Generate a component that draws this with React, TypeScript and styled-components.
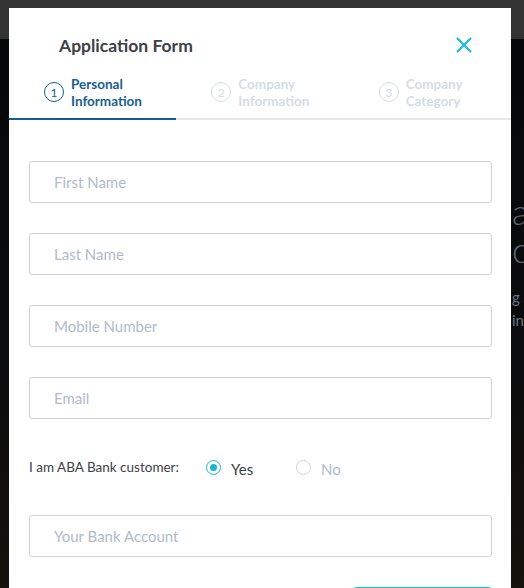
import styled, { createGlobalStyle } from "styled-components";

const GlobalStyle = createGlobalStyle`
  html, body {
    margin: 0;
    padding: 0;
    width: 524px;
    height: 588px;
    overflow: hidden;
    background: #000;
    font-family: "Lato", "Noto Sans", sans-serif;
  }
`;

const Page = styled.div`
  position: relative;
  width: 524px;
  height: 588px;
  overflow: hidden;
  background: linear-gradient(180deg, #050607 0%, #0b0c0e 60%, #15110c 100%);
`;

const TopBar = styled.div`
  height: 39px;
  background: #333333;
`;

const Hero = styled.div`
  padding: 153px 0 0 512px;
  white-space: nowrap;
  color: #5d6670;
`;

const HeroTitle = styled.div`
  font-size: 35px;
  font-weight: 300;
  line-height: 38px;
`;

const HeroText = styled.div<{ $first?: boolean }>`
  margin-top: ${(p) => (p.$first ? "18px" : "0")};
  font-size: 15px;
  line-height: 23px;
  color: #6e757d;
`;

const Modal = styled.div`
  position: absolute;
  left: 9px;
  top: 8px;
  width: 502px;
  bottom: 0;
  background: #fff;
`;

const Header = styled.div`
  display: flex;
  align-items: center;
  justify-content: space-between;
  padding: 26px 38px 0 50px;
  height: 22px;
`;

const Title = styled.h1`
  margin: 0;
  font-size: 17.5px;
  font-weight: 700;
  color: #3b4047;
`;

const Close = styled.button`
  border: 0;
  background: none;
  padding: 0;
  width: 18px;
  height: 18px;
  cursor: pointer;
  display: flex;
`;

const Tabs = styled.div`
  display: grid;
  grid-template-columns: repeat(3, 1fr);
  margin-top: 20px;
  border-bottom: 2px solid #e4e8ec;
`;

const Tab = styled.div<{ $active?: boolean }>`
  display: flex;
  align-items: flex-start;
  gap: 7px;
  padding: 0 0 8px 35px;
  margin-bottom: -2px;
  border-bottom: 2px solid ${(p) => (p.$active ? "#0f5f8c" : "transparent")};
  color: ${(p) => (p.$active ? "#17608f" : "#d6dce3")};
`;

const StepNum = styled.span`
  flex: none;
  box-sizing: border-box;
  width: 20px;
  height: 20px;
  margin-top: 6px;
  border-radius: 50%;
  border: 1px solid currentColor;
  display: flex;
  align-items: center;
  justify-content: center;
  font-size: 12px;
  font-weight: 400;
`;

const StepLabel = styled.span`
  font-size: 13.5px;
  font-weight: 700;
  line-height: 17px;
`;

const Form = styled.form`
  display: flex;
  flex-direction: column;
  gap: 30px;
  padding: 41px 19px 0 20px;
`;

const Input = styled.input`
  box-sizing: border-box;
  width: 100%;
  height: 42px;
  padding: 0 24px;
  border: 1px solid #d0d3dc;
  border-radius: 3px;
  font-family: inherit;
  font-size: 15px;
  color: #3b4047;
  outline: none;
  &::placeholder {
    color: #b3bac8;
  }
`;

const RadioRow = styled.div`
  display: flex;
  align-items: center;
  height: 36px;
`;

const RadioLabel = styled.span`
  font-size: 13.5px;
  color: #3b4047;
  width: 177px;
`;

const Option = styled.label<{ $checked?: boolean }>`
  display: flex;
  align-items: center;
  gap: 10px;
  width: 90px;
  font-size: 15px;
  color: ${(p) => (p.$checked ? "#3b4047" : "#b3bac8")};
`;

const OptionText = styled.span`
  margin-top: 4px;
`;

const Dot = styled.span<{ $checked?: boolean }>`
  box-sizing: border-box;
  width: 15px;
  height: 15px;
  border-radius: 50%;
  border: 1px solid ${(p) => (p.$checked ? "#17b5cf" : "#d0d3dc")};
  display: flex;
  align-items: center;
  justify-content: center;
  &::after {
    content: "";
    width: 7px;
    height: 7px;
    border-radius: 50%;
    background: ${(p) => (p.$checked ? "#17b5cf" : "transparent")};
  }
`;

const Actions = styled.div`
  display: flex;
  justify-content: flex-end;
`;

const Button = styled.button`
  width: 139px;
  height: 40px;
  border: 0;
  border-radius: 4px;
  background: #17b9d1;
  color: #fff;
  font-family: inherit;
  font-size: 15px;
`;

const steps = [
  { n: 1, a: "Personal", b: "Information" },
  { n: 2, a: "Company", b: "Information" },
  { n: 3, a: "Company", b: "Category" },
];

export default function App() {
  return (
    <Page>
      <GlobalStyle />
      <TopBar />
      <Hero>
        <HeroTitle>al</HeroTitle>
        <HeroTitle>ce</HeroTitle>
        <HeroText $first>g a</HeroText>
        <HeroText>in</HeroText>
      </Hero>
      <Modal>
        <Header>
          <Title>Application Form</Title>
          <Close aria-label="Close">
            <svg width="18" height="18" viewBox="0 0 18 18">
              <path
                d="M2 2 L16 16 M16 2 L2 16"
                stroke="#1dbcd5"
                strokeWidth="2.2"
                fill="none"
              />
            </svg>
          </Close>
        </Header>
        <Tabs>
          {steps.map((s) => (
            <Tab key={s.n} $active={s.n === 1}>
              <StepNum>{s.n}</StepNum>
              <StepLabel>
                {s.a}
                <br />
                {s.b}
              </StepLabel>
            </Tab>
          ))}
        </Tabs>
        <Form onSubmit={(e) => e.preventDefault()}>
          <Input placeholder="First Name" />
          <Input placeholder="Last Name" />
          <Input placeholder="Mobile Number" />
          <Input placeholder="Email" />
          <RadioRow>
            <RadioLabel>I am ABA Bank customer:</RadioLabel>
            <Option $checked>
              <Dot $checked />
              <OptionText>Yes</OptionText>
            </Option>
            <Option>
              <Dot />
              <OptionText>No</OptionText>
            </Option>
          </RadioRow>
          <Input placeholder="Your Bank Account" />
          <Actions>
            <Button type="submit">Next</Button>
          </Actions>
        </Form>
      </Modal>
    </Page>
  );
}
